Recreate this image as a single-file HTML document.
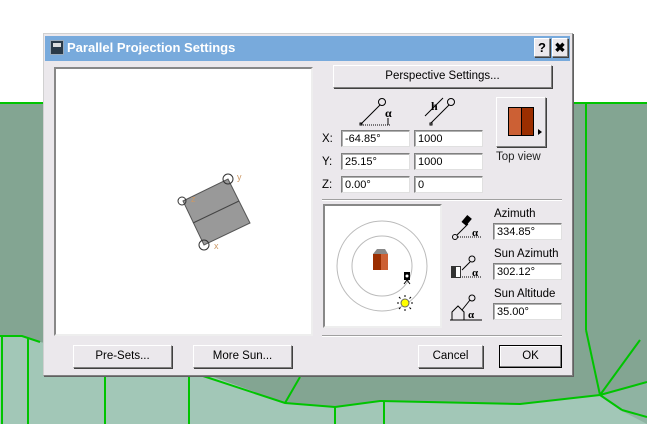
<!DOCTYPE html>
<html><head><style>
*{box-sizing:border-box;margin:0;padding:0}
body{width:647px;height:424px;position:relative;overflow:hidden;background:#fff;font-family:"Liberation Sans",sans-serif;font-size:11px;color:#000}
.a{position:absolute}
.btn{position:absolute;background:#ebe8ec;border:1px solid;border-color:#fff #808080 #808080 #fff;box-shadow:1px 1px 0 #404040;text-align:center;font-size:11.5px}
.inp{position:absolute;background:#fff;border:1px solid;border-color:#808080 #e0e0e0 #e0e0e0 #808080;box-shadow:inset 1px 1px 0 #b0b0b0;font-size:11px;padding:2px 0 0 3px;height:17px}
.lbl{position:absolute;font-size:11.5px}
</style></head><body>
<svg class="a" style="left:0;top:0" width="647" height="424">
<rect x="0" y="103" width="647" height="321" fill="#83a592"/>
<polygon points="0,336 22,336 40,342 200,372 285,403 335,407 380,401 520,404 600,395 647,382 647,424 0,424" fill="#a2c7b7"/>
<polygon points="600,395 620,410 647,424 647,382" fill="#8fb3a2"/>
<g stroke="#00c400" stroke-width="2" fill="none">
<line x1="0" y1="103" x2="647" y2="103"/>
<line x1="586" y1="103" x2="586" y2="330"/>
<polyline points="0,336 22,336 40,342"/>
<line x1="2" y1="336" x2="2" y2="424"/>
<line x1="28" y1="338" x2="28" y2="424"/>
<polyline points="200,375 285,403 335,407 380,401 520,404 600,395 647,382"/>
<line x1="586" y1="330" x2="600" y2="395"/>
<line x1="600" y1="395" x2="622" y2="410"/>
<line x1="622" y1="410" x2="647" y2="417"/>
<line x1="300" y1="377" x2="285" y2="403"/>
<line x1="105" y1="376" x2="105" y2="424"/>
<line x1="189" y1="376" x2="189" y2="424"/>
<line x1="335" y1="407" x2="335" y2="424"/>
<line x1="384" y1="401" x2="384" y2="424"/>
<line x1="600" y1="395" x2="640" y2="340"/>
</g>
</svg>
<div class="a" style="left:43px;top:33px;width:530px;height:343px;background:#ebe8ec;border:1px solid #d0d0d0;border-right-color:#808080;border-bottom-color:#808080;box-shadow:1px 1px 0 #606060"></div>
<div class="a" style="left:45px;top:36px;width:525px;height:25px;background:#78aadc"></div>
<div class="a" style="left:50px;top:40px;width:14px;height:15px;background:#2a3a48;border:1px solid #9ab"></div>
<div class="a" style="left:53px;top:43px;width:8px;height:4px;background:#ddd"></div>
<div class="a" style="left:67px;top:40px;color:#fff;font-size:13px;font-weight:bold">Parallel Projection Settings</div>
<div class="btn" style="left:534px;top:38px;width:16px;height:19px;font-weight:bold;font-size:13px;line-height:17px">?</div>
<div class="btn" style="left:552px;top:38px;width:16px;height:19px;font-weight:bold;font-size:13px;line-height:17px">✖</div>
<div class="a" style="left:54px;top:67px;width:259px;height:269px;background:#fff;border:2px solid;border-color:#888 #eee #eee #888"></div>
<svg class="a" style="left:160px;top:165px" width="100" height="95">
<polygon points="23,36 68,14 90,58 44,80" fill="#999" stroke="#555"/>
<line x1="33" y1="58" x2="79" y2="36" stroke="#444"/>
<circle cx="68" cy="14" r="5" fill="none" stroke="#333"/><circle cx="22" cy="36" r="4" fill="none" stroke="#333"/><circle cx="44" cy="80" r="5" fill="none" stroke="#333"/>
<text x="77" y="15" font-size="9" fill="#c96">y</text><text x="31" y="37" font-size="9" fill="#c96">z</text><text x="54" y="84" font-size="9" fill="#c96">x</text>
</svg>
<div class="btn" style="left:333px;top:65px;width:219px;height:23px;line-height:21px">Perspective Settings...</div>
<svg class="a" style="left:355px;top:95px" width="130" height="35">
<g stroke="#000" fill="none"><circle cx="27" cy="7" r="3.5"/><line x1="25" y1="10" x2="6" y2="29"/><rect x="5" y="28" width="2" height="2"/><line x1="8" y1="30" x2="36" y2="30" stroke-dasharray="1,1"/><line x1="33" y1="23" x2="33" y2="30"/>
<circle cx="96" cy="7" r="3.5"/><line x1="94" y1="10" x2="76" y2="28"/><rect x="75" y="28" width="2" height="2"/><line x1="88" y1="3" x2="70" y2="21"/></g>
<text x="30" y="22" font-size="12" font-weight="bold" font-family="Liberation Serif">α</text>
<text x="76" y="15" font-size="12" font-weight="bold" font-family="Liberation Serif">h</text>
</svg>
<div class="lbl" style="left:322px;top:133px">X:</div><div class="lbl" style="left:322px;top:156px">Y:</div><div class="lbl" style="left:322px;top:179px">Z:</div>
<div class="inp" style="left:341px;top:130px;width:69px">-64.85°</div><div class="inp" style="left:414px;top:130px;width:69px">1000</div>
<div class="inp" style="left:341px;top:153px;width:69px">25.15°</div><div class="inp" style="left:414px;top:153px;width:69px">1000</div>
<div class="inp" style="left:341px;top:176px;width:69px">0.00°</div><div class="inp" style="left:414px;top:176px;width:69px">0</div>
<div class="btn" style="left:496px;top:97px;width:50px;height:50px"></div>
<div class="a" style="left:508px;top:107px;width:13px;height:29px;background:#cc6034;border:1px solid #000;border-right:none"></div>
<div class="a" style="left:521px;top:107px;width:13px;height:29px;background:#9b2e00;border:1px solid #000"></div>
<div class="a" style="left:538px;top:129px;width:0;height:0;border-left:4px solid #000;border-top:3px solid transparent;border-bottom:3px solid transparent"></div>
<div class="lbl" style="left:496px;top:151px;color:#222">Top view</div>
<div class="a" style="left:322px;top:199px;width:240px;height:2px;border-top:1px solid #a0a0a0;border-bottom:1px solid #fff"></div>
<div class="a" style="left:323px;top:204px;width:119px;height:124px;background:#fff;border:2px solid;border-color:#888 #eee #eee #888"></div>
<svg class="a" style="left:323px;top:204px" width="119" height="124">
<circle cx="59" cy="62" r="45" fill="none" stroke="#bbb"/><circle cx="59" cy="62" r="30" fill="none" stroke="#bbb"/>
<polygon points="50,50 54,45 62,45 65,50 65,66 50,66" fill="#888"/>
<rect x="50" y="50" width="8" height="16" fill="#9b2e00"/><rect x="58" y="50" width="7" height="16" fill="#cc6034"/>
<rect x="81" y="68" width="6" height="8" fill="#000"/><circle cx="84" cy="72" r="1.5" fill="#fff"/><path d="M84 76 l-3 4 M84 76 l3 4" stroke="#000"/>
<circle cx="82" cy="99" r="4" fill="#ff0" stroke="#666"/><g stroke="#000"><path d="M82 91v2M82 105v2M74 99h2M88 99h2M76 93l1.5 1.5M88 93l-1.5 1.5M76 105l1.5-1.5M88 105l-1.5-1.5"/></g>
</svg>
<svg class="a" style="left:450px;top:212px" width="42" height="110">
<g stroke="#000" fill="none"><circle cx="5" cy="25" r="2.5"/><line x1="7" y1="23" x2="18" y2="12"/><line x1="8" y1="25" x2="32" y2="25" stroke-dasharray="1,1"/>
<line x1="8" y1="65" x2="32" y2="65" stroke-dasharray="1,1"/><line x1="12" y1="58" x2="20" y2="50"/>
<line x1="0" y1="108" x2="32" y2="108"/><path d="M2 108V100L8 94L14 100V108"/><line x1="12" y1="98" x2="20" y2="88"/>
<circle cx="22" cy="47" r="3"/><circle cx="22" cy="86" r="3"/></g>
<rect x="14" y="4" width="6" height="9" fill="#000" transform="rotate(40 17 8)"/>
<rect x="1" y="54" width="10" height="12" fill="#333"/><rect x="6" y="55" width="4" height="10" fill="#fff"/>
<g font-size="11" font-weight="bold" font-family="Liberation Serif"><text x="22" y="24">α</text><text x="22" y="64">α</text><text x="18" y="106">α</text></g>
</svg>
<div class="lbl" style="left:494px;top:208px">Azimuth</div>
<div class="inp" style="left:493px;top:223px;width:69px">334.85°</div>
<div class="lbl" style="left:494px;top:248px">Sun Azimuth</div>
<div class="inp" style="left:493px;top:263px;width:69px">302.12°</div>
<div class="lbl" style="left:494px;top:288px">Sun Altitude</div>
<div class="inp" style="left:493px;top:303px;width:69px">35.00°</div>
<div class="a" style="left:322px;top:335px;width:240px;height:2px;border-top:1px solid #a0a0a0;border-bottom:1px solid #fff"></div>
<div class="btn" style="left:73px;top:345px;width:99px;height:23px;line-height:21px">Pre-Sets...</div>
<div class="btn" style="left:193px;top:345px;width:99px;height:23px;line-height:21px">More Sun...</div>
<div class="btn" style="left:418px;top:345px;width:65px;height:23px;line-height:21px">Cancel</div>
<div class="btn" style="left:499px;top:345px;width:63px;height:23px;line-height:21px;border:1px solid #000;box-shadow:inset -1px -1px 0 #808080,inset 1px 1px 0 #fff">OK</div>
</body></html>
